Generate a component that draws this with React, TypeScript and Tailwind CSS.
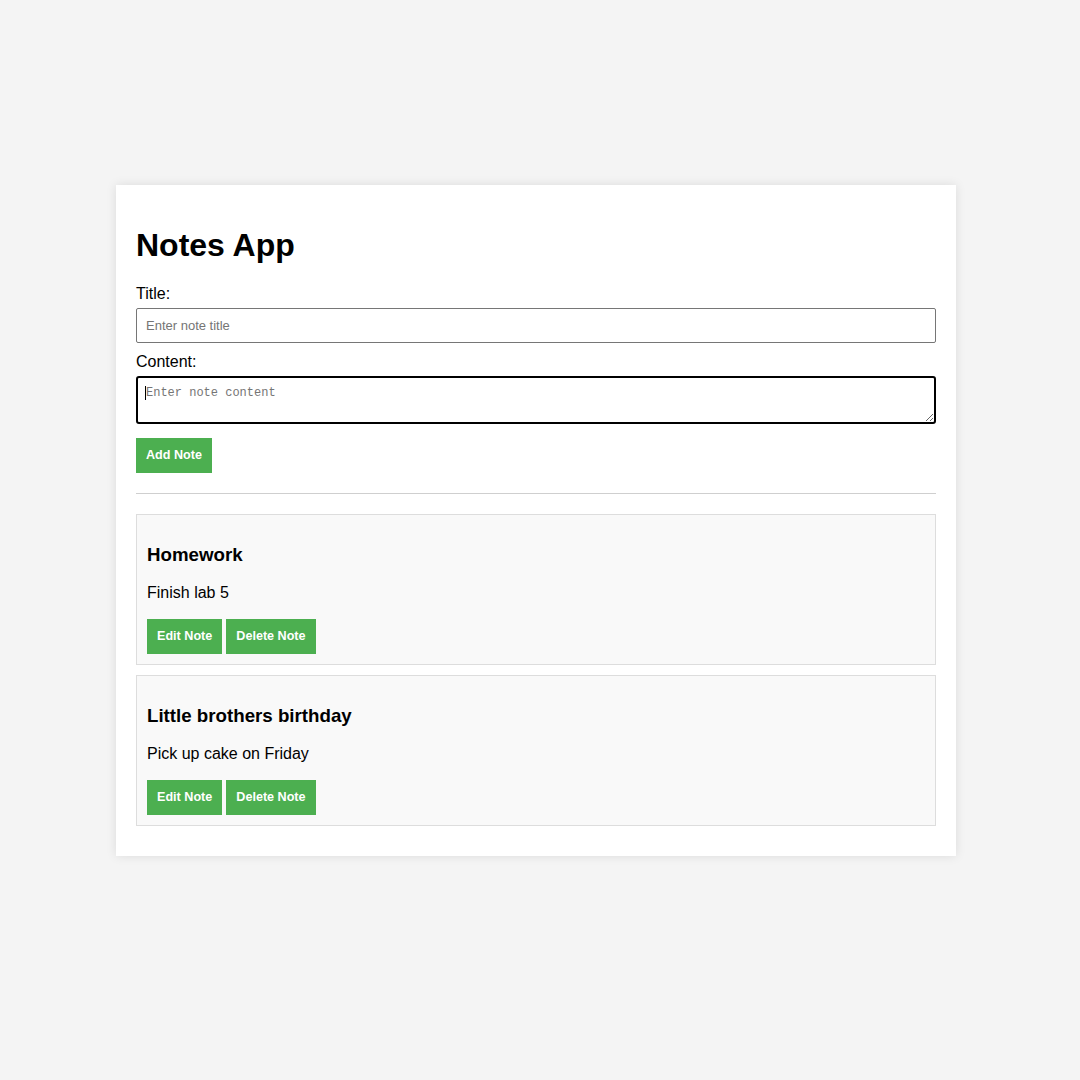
import * as React from "react";

type Note = { id: number; title: string; content: string };

const initialNotes: Note[] = [
  { id: 1, title: "Homework", content: "Finish lab 5" },
  { id: 2, title: "Little brothers birthday", content: "Pick up cake on Friday" },
];

const btn =
  "bg-[#4caf50] text-white font-bold text-[12.6px] leading-[15px] px-[10px] py-[10px] h-[35px] cursor-pointer";

export default function App() {
  const [notes] = React.useState<Note[]>(initialNotes);
  const [title, setTitle] = React.useState("");
  const [content, setContent] = React.useState("");

  return (
    <div className="min-h-[1080px] bg-[#f4f4f4] font-['Liberation_Sans',Arial,sans-serif] text-black flex justify-center pr-[8px] pt-[185px]">
      <div className="w-[840px] h-fit bg-white p-[20px] shadow-[0_0_10px_rgba(0,0,0,0.1)]">
        <h1 className="text-[32px] font-bold leading-[37px] mt-[22px] mb-[21px]">Notes App</h1>

        <label className="block text-[16px] leading-[18px] mb-[5px]">Title:</label>
        <input
          value={title}
          onChange={(e) => setTitle(e.target.value)}
          placeholder="Enter note title"
          className="block w-full h-[35px] border border-[#767676] rounded-[2px] px-[9px] text-[13px] placeholder-[#757575] outline-none mb-[10px]"
        />

        <label className="block text-[16px] leading-[18px] mb-[5px]">Content:</label>
        <div className="relative mb-[14px]">
          <textarea
            value={content}
            onChange={(e) => setContent(e.target.value)}
            placeholder="Enter note content"
            className="block w-full h-[48px] border-2 border-black rounded-[3px] px-[8px] pt-[8px] pb-[4px] font-['Liberation_Mono',monospace] text-[12px] leading-[15px] placeholder-[#757575] outline-none resize-y"
          />
          <span className="absolute left-[9px] top-[10px] w-px h-[14px] bg-black" />
        </div>

        <button className={btn}>Add Note</button>

        <hr className="border-0 border-t border-[#cfcfcf] my-[20px]" />

        {notes.map((n) => (
          <div key={n.id} className="bg-[#f9f9f9] border border-[#ddd] p-[10px] mb-[10px]">
            <h3 className="text-[18.72px] font-bold leading-[22px] mt-[19px] mb-[18px]">{n.title}</h3>
            <p className="text-[16px] leading-[18.5px] mb-[16.5px]">{n.content}</p>
            <div className="flex gap-[4px]">
              <button className={btn}>Edit Note</button>
              <button className={btn}>Delete Note</button>
            </div>
          </div>
        ))}
      </div>
    </div>
  );
}
